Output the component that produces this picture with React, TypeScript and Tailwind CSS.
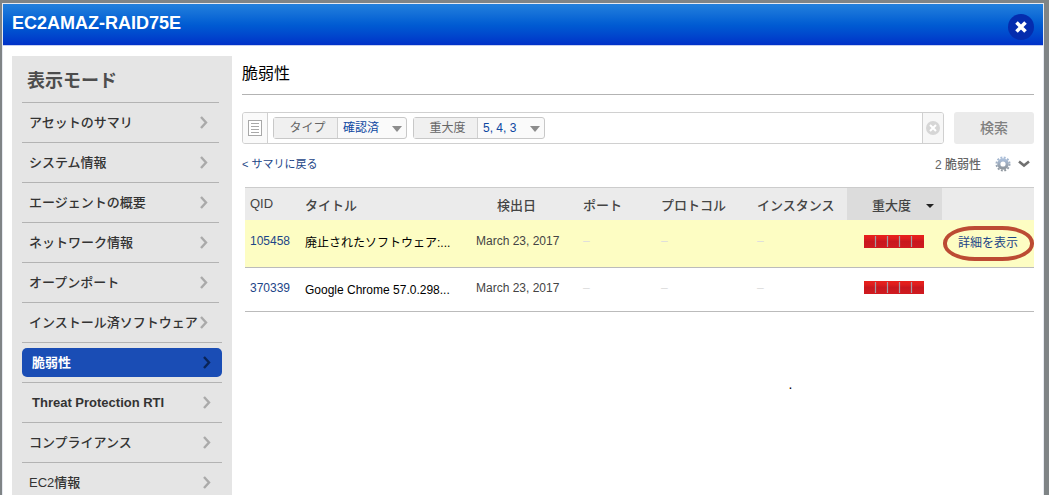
import clsx from "clsx";

interface INavItem {
  label: string;
  wide?: boolean;
  active?: boolean;
  bold?: boolean;
}

interface IVuln {
  qid: string;
  title: string;
  date: string;
  highlighted?: boolean;
}

const navItems: INavItem[] = [
  { label: "アセットのサマリ" },
  { label: "システム情報" },
  { label: "エージェントの概要" },
  { label: "ネットワーク情報" },
  { label: "オープンポート" },
  { label: "インストール済ソフトウェア" },
  { label: "脆弱性", wide: true, active: true },
  { label: "Threat Protection RTI", wide: true, bold: true },
  { label: "コンプライアンス", wide: true },
  { label: "EC2情報", wide: true },
];

const vulns: IVuln[] = [
  {
    qid: "105458",
    title: "廃止されたソフトウェア:...",
    date: "March 23, 2017",
    highlighted: true,
  },
  { qid: "370339", title: "Google Chrome 57.0.298...", date: "March 23, 2017" },
];

const Chevron = ({ className }: { className?: string }) => (
  <svg
    className={clsx("shrink-0", className)}
    width="8"
    height="13"
    viewBox="0 0 8 13"
    fill="none"
    stroke="currentColor"
    strokeWidth="2.4"
  >
    <path d="M1 1l5 5.5L1 12" />
  </svg>
);

const Gear = () => (
  <svg width="16" height="16" viewBox="0 0 16 16">
    <defs>
      <linearGradient id="gear" x1="0" y1="0" x2="0" y2="1">
        <stop offset="0" stopColor="#a9bdd8" />
        <stop offset="1" stopColor="#8f979f" />
      </linearGradient>
    </defs>
    <circle cx="8" cy="8" r="4.2" fill="none" stroke="url(#gear)" strokeWidth="3.2" />
    <circle
      cx="8"
      cy="8"
      r="6.5"
      fill="none"
      stroke="url(#gear)"
      strokeWidth="2"
      strokeDasharray="1.9 1.503"
    />
  </svg>
);

const SeverityBar = () => (
  <svg className="block" width="60" height="13" viewBox="0 0 60 13" role="img" aria-label="5">
    <defs>
      <linearGradient id="severity" x1="0" y1="0" x2="0" y2="1">
        <stop offset="0" stopColor="#e8201c" />
        <stop offset="0.25" stopColor="#e01e1e" />
        <stop offset="0.5" stopColor="#c8171e" />
        <stop offset="1" stopColor="#d01a20" />
      </linearGradient>
    </defs>
    <rect width="60" height="13" fill="url(#severity)" />
    <path d="M11.5 1v11M23.5 1v11M35.5 1v11M47.5 1v11" stroke="#a39aa3" strokeWidth="1.2" />
  </svg>
);

const Filter = ({ id, label, value, width }: { id: string; label: string; value: string; width: string }) => (
  <div className="flex h-[22px] rounded-[3px] border border-[#c8c8c8] bg-[#fafafa] text-xs">
    <label
      htmlFor={id}
      className="flex w-16 items-center justify-center border-r border-[#d0d0d0] bg-[#f0f0f0] pl-1 text-[#666]"
    >
      {label}
    </label>
    <div className={clsx("relative", width)}>
      <select id={id} className="h-full w-full appearance-none pl-[5px] text-[#0d47a1] outline-none">
        <option>{value}</option>
      </select>
      <svg
        className="pointer-events-none absolute top-2 right-1"
        width="10"
        height="6"
        viewBox="0 0 10 6"
        fill="#8c8c8c"
      >
        <path d="M0 0h10L5 6z" />
      </svg>
    </div>
  </div>
);

const Sidebar = () => (
  <aside className="w-[220px] shrink-0 bg-[#e5e5e5] pl-[10px]">
    <h2 className="flex h-[46px] items-center pt-1 pl-[5px] text-lg font-bold text-[#4d4d4d]">
      表示モード
    </h2>
    <ul>
      {navItems.map((item) => (
        <li
          key={item.label}
          className={clsx(
            "flex h-10 items-center border-t border-[#b3b3b3]",
            item.wide ? "mr-[10px]" : "mr-[13px]"
          )}
        >
          <a
            href="#"
            className={clsx(
              "flex h-[29px] w-full items-center justify-between rounded-[5px] pr-[11px] text-[13px] whitespace-nowrap",
              item.active ? "bg-[#1a4db5] text-white" : "text-[#333]",
              item.active || item.bold ? "pl-[10px] font-bold" : "pl-[7px] font-medium"
            )}
          >
            {item.label}
            <Chevron className={item.active ? "text-[#0a2458]" : "text-[#aaa]"} />
          </a>
        </li>
      ))}
    </ul>
  </aside>
);

const SearchBar = () => (
  <div className="mt-[17px] flex gap-[10px]">
    <div className="flex h-8 flex-1 items-stretch overflow-hidden rounded-[3px] border border-[#d0d0d0]">
      <button
        aria-label="フィルタ"
        className="flex w-[25px] shrink-0 items-center justify-center border-r border-[#d0d0d0] bg-[#fafafa]"
      >
        <svg width="14" height="16" viewBox="0 0 14 16" fill="none" stroke="#a8a8a8">
          <rect x="0.5" y="0.5" width="13" height="15" fill="#fff" />
          <path d="M3 3.5h8M3 6.5h8M3 9.5h8M3 12.5h8" />
        </svg>
      </button>
      <div className="flex flex-1 items-center gap-[6px] pl-[5px]">
        <Filter id="type" label="タイプ" value="確認済" width="w-[68px]" />
        <Filter id="severity-filter" label="重大度" value="5, 4, 3" width="w-[66px]" />
        <input aria-label="検索条件" className="h-full min-w-0 flex-1 text-xs outline-none" />
      </div>
      <button
        aria-label="クリア"
        className="flex w-[21px] shrink-0 items-center justify-center border-l border-[#d0d0d0] bg-[#f7f7f7]"
      >
        <svg width="14" height="14" viewBox="0 0 14 14">
          <circle cx="7" cy="7" r="7" fill="#d6d6d6" />
          <path d="M4 4l6 6M10 4l-6 6" stroke="#fff" strokeWidth="2" />
        </svg>
      </button>
    </div>
    <button className="h-8 w-20 rounded-[3px] bg-[#ebebeb] text-sm font-medium text-[#808080]">
      検索
    </button>
  </div>
);

const VulnTable = () => (
  <table className="w-full table-fixed border-collapse text-left text-[13px] whitespace-nowrap">
    <colgroup>
      <col className="w-[55px]" />
      <col />
      <col className="w-[107px]" />
      <col className="w-[78px]" />
      <col className="w-24" />
      <col className="w-[95px]" />
      <col className="w-[95px]" />
      <col className="w-[92px]" />
    </colgroup>
    <thead>
      <tr className="h-8 border-t border-[#ccc] bg-[#ebebeb] text-[#444]">
        <th className="pl-[5px] font-normal">QID</th>
        <th className="pt-1 pl-[5px] font-medium">タイトル</th>
        <th className="pt-1 pr-4 text-center font-medium">検出日</th>
        <th className="pt-1 pl-[5px] font-medium">ポート</th>
        <th className="pt-1 pl-[5px] font-medium">プロトコル</th>
        <th className="pt-1 pl-[5px] font-medium">インスタンス</th>
        <th className="bg-[#dcdcdc] pt-1 pl-[25px] font-medium">
          <button className="flex items-center gap-[15px]">
            重大度
            <svg width="8" height="4" viewBox="0 0 8 4" fill="#222">
              <path d="M0 0h8L4 4z" />
            </svg>
          </button>
        </th>
        <th aria-label="操作" />
      </tr>
    </thead>
    <tbody>
      {vulns.map((v) => (
        <tr
          key={v.qid}
          className={clsx(
            "border-b border-[#bbb] text-xs text-[#444]",
            v.highlighted ? "h-12 bg-[#fdfdc3]" : "h-11"
          )}
        >
          <td className="pb-1 pl-[5px]">
            <a href="#" className="text-[#1c4587]">
              {v.qid}
            </a>
          </td>
          <td className="pl-[5px] text-black">{v.title}</td>
          <td className="pb-1 pl-[5px]">{v.date}</td>
          <td className="pb-1 pl-[5px] text-[#ddd]">–</td>
          <td className="pb-1 pl-[5px] text-[#ddd]">–</td>
          <td className="pb-1 pl-[5px] text-[#ddd]">–</td>
          <td className="pb-1 pl-[17px]">
            <SeverityBar />
          </td>
          <td>
            {v.highlighted && (
              <a
                href="#"
                className="mx-auto flex h-[35px] w-[91px] items-center justify-center rounded-[32px/17px] border-4 border-[#bc4b33] text-[#1c4587]"
              >
                詳細を表示
              </a>
            )}
          </td>
        </tr>
      ))}
    </tbody>
  </table>
);

const App = () => {
  return (
    <div className="h-screen overflow-hidden bg-[#7f8486] pt-[3px] pr-[5px] pl-[2px] font-['Liberation_Sans','Noto_Sans_CJK_JP',sans-serif]">
      <div className="flex h-full flex-col border-x border-t border-[#e6e9f0] bg-white">
        <header className="flex h-[42px] shrink-0 items-center justify-between border-b border-[#c5cff0] bg-linear-to-b from-[#2380dc] to-[#0030c8] pr-[9px] pl-[9px]">
          <h1 className="pb-1 text-lg font-bold text-white">EC2AMAZ-RAID75E</h1>
          <button
            aria-label="閉じる"
            className="mt-1 flex size-[26px] items-center justify-center rounded-full bg-[#042cae]"
          >
            <svg width="12" height="12" viewBox="0 0 12 12" stroke="#fff" strokeWidth="3.6">
              <path d="M1.5 1.5l9 9M10.5 1.5l-9 9" />
            </svg>
          </button>
        </header>
        <div className="flex min-h-0 flex-1 gap-[10px] pt-[10px] pr-[9px] pl-[9px]">
          <Sidebar />
          <main className="min-w-0 flex-1">
            <h2 className="flex h-[39px] items-center border-b border-[#b3b3b3] pb-[2px] text-base text-black">
              脆弱性
            </h2>
            <SearchBar />
            <div className="mt-2 flex h-6 items-center justify-between text-xs">
              <a href="#" className="text-[11px] text-[#1c4587]">
                &lt; サマリに戻る
              </a>
              <div className="flex items-center pr-1 text-[#666]">
                <span className="pt-[2px] font-medium">2 脆弱性</span>
                <button aria-label="設定" className="ml-[14px] flex items-center gap-[7px]">
                  <Gear />
                  <svg
                    width="12"
                    height="8"
                    viewBox="0 0 12 8"
                    fill="none"
                    stroke="#707070"
                    strokeWidth="2.6"
                  >
                    <path d="M1 1.5l5 4 5-4" />
                  </svg>
                </button>
              </div>
            </div>
            <div className="mt-[11px] pl-[3px]">
              <VulnTable />
            </div>
            <p className="mt-[62px] pl-[69%] text-sm text-black">.</p>
          </main>
        </div>
      </div>
    </div>
  );
};

export default App;
